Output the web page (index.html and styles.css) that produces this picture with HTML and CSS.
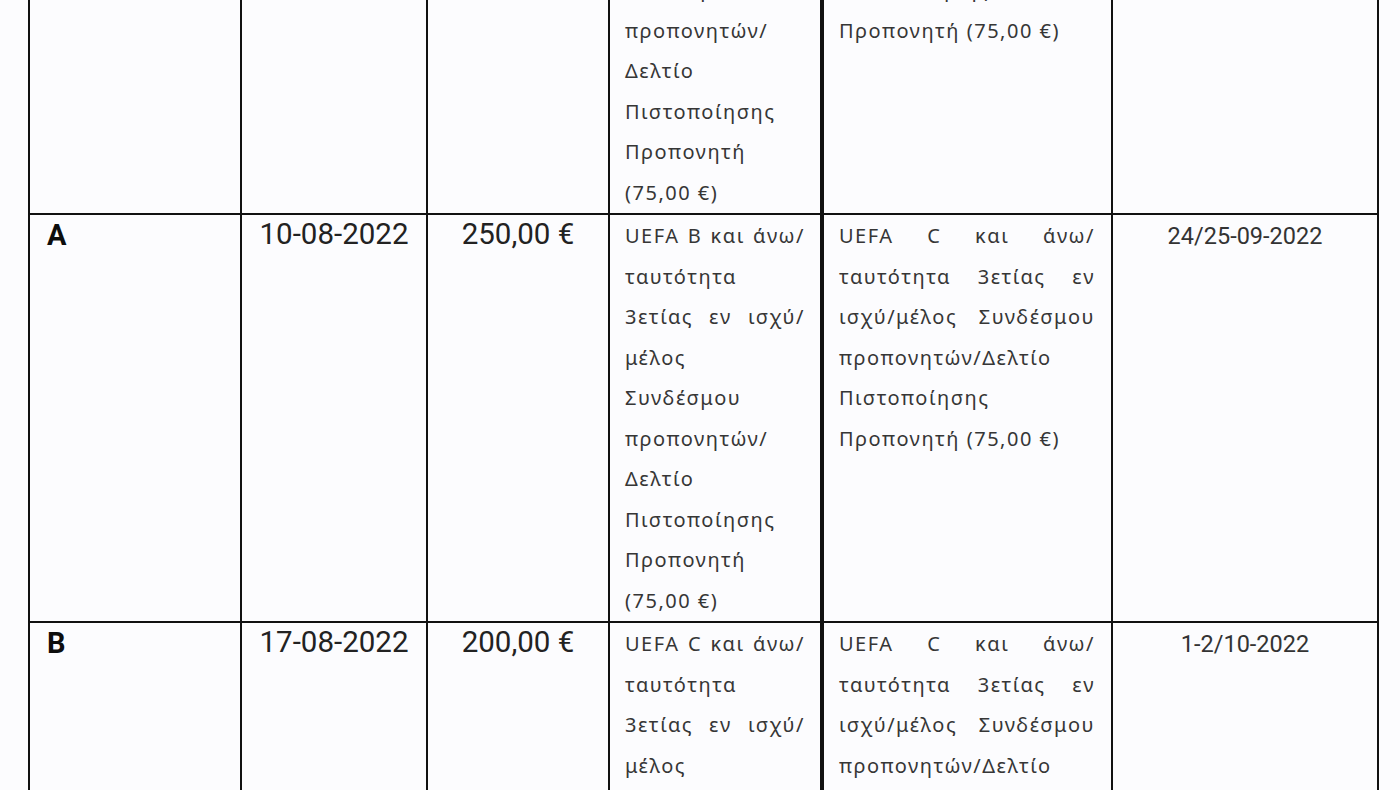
FILE: index.html
```html
<!DOCTYPE html>
<html lang="el">
<head>
<meta charset="utf-8">
<title>Πρόγραμμα σεμιναρίων</title>
<link rel="stylesheet" href="styles.css">
</head>
<body>
<main class="page">
  <table class="schedule">
    <colgroup>
      <col class="c-label">
      <col class="c-date">
      <col class="c-fee">
      <col class="c-req">
      <col class="c-req2">
      <col class="c-when">
    </colgroup>
    <tbody>
      <tr>
        <td class="label">UEFA A</td>
        <td class="num">03-08-2022</td>
        <td class="num">300,00 €</td>
        <td class="req">UEFA B και άνω/ ταυτότητα 3ετίας εν ισχύ/ μέλος Συνδέσμου προπονητών/ Δελτίο Πιστοποίησης Προπονητή (75,00 €)</td>
        <td class="req2">UEFA B και άνω/ ταυτότητα 3ετίας εν ισχύ/ μέλος Συνδέσμου προπονητών/ Δελτίο Πιστοποίησης Προπονητή (75,00 €)</td>
        <td class="when">17/18-09-2022</td>
      </tr>
      <tr>
        <td class="label">A</td>
        <td class="num">10-08-2022</td>
        <td class="num">250,00 €</td>
        <td class="req">UEFA B και άνω/ ταυτότητα 3ετίας εν ισχύ/ μέλος Συνδέσμου προπονητών/ Δελτίο Πιστοποίησης Προπονητή (75,00 €)</td>
        <td class="req2">UEFA C και άνω/ ταυτότητα 3ετίας εν ισχύ/μέλος Συνδέσμου προπονητών/Δελτίο Πιστοποίησης Προπονητή (75,00 €)</td>
        <td class="when">24/25-09-2022</td>
      </tr>
      <tr>
        <td class="label">B</td>
        <td class="num">17-08-2022</td>
        <td class="num">200,00 €</td>
        <td class="req">UEFA C και άνω/ ταυτότητα 3ετίας εν ισχύ/ μέλος Συνδέσμου προπονητών/ Δελτίο Πιστοποίησης Προπονητή (75,00 €)</td>
        <td class="req2">UEFA C και άνω/ ταυτότητα 3ετίας εν ισχύ/μέλος Συνδέσμου προπονητών/Δελτίο Πιστοποίησης Προπονητή (75,00 €)</td>
        <td class="when">1-2/10-2022</td>
      </tr>
    </tbody>
  </table>
</main>
</body>
</html>
```
FILE: styles.css
```css
html, body {
  margin: 0;
  padding: 0;
  background: #fcfcfe;
}

body {
  font-family: Roboto, "Noto Sans", sans-serif;
  color: #222;
  overflow: hidden;
}

.page {
  padding: 0 21px 0 28px;
}

.schedule {
  margin-top: -195px;
  width: 1351px;
  border-collapse: collapse;
  table-layout: fixed;
}

.c-label { width: 212px; }
.c-date { width: 186px; }
.c-fee { width: 182px; }
.c-req { width: 213px; }
.c-req2 { width: 290px; }
.c-when { width: 266px; }

.schedule td {
  border: 2px solid #111;
  vertical-align: top;
  padding: 1px 15px 0 15px;
  line-height: 40.5px;
}

.label {
  font-family: Roboto, sans-serif;
  font-weight: 700;
  font-size: 29px;
  color: #0d0d0d;
  padding-left: 17px !important;
  line-height: 38px !important;
}

.num {
  font-family: Roboto, sans-serif;
  font-size: 29.5px;
  color: #222;
  text-align: center;
  line-height: 36px !important;
}

.req, .req2 {
  font-family: "Noto Sans", sans-serif;
  font-size: 20px;
  letter-spacing: 1.5px;
  color: #363636;
  text-align: justify;
}

.req2 {
  border-left-width: 4px !important;
  padding-right: 16px !important;
}

.when {
  font-family: Roboto, sans-serif;
  font-size: 23.5px;
  color: #333;
  text-align: center;
}
```
